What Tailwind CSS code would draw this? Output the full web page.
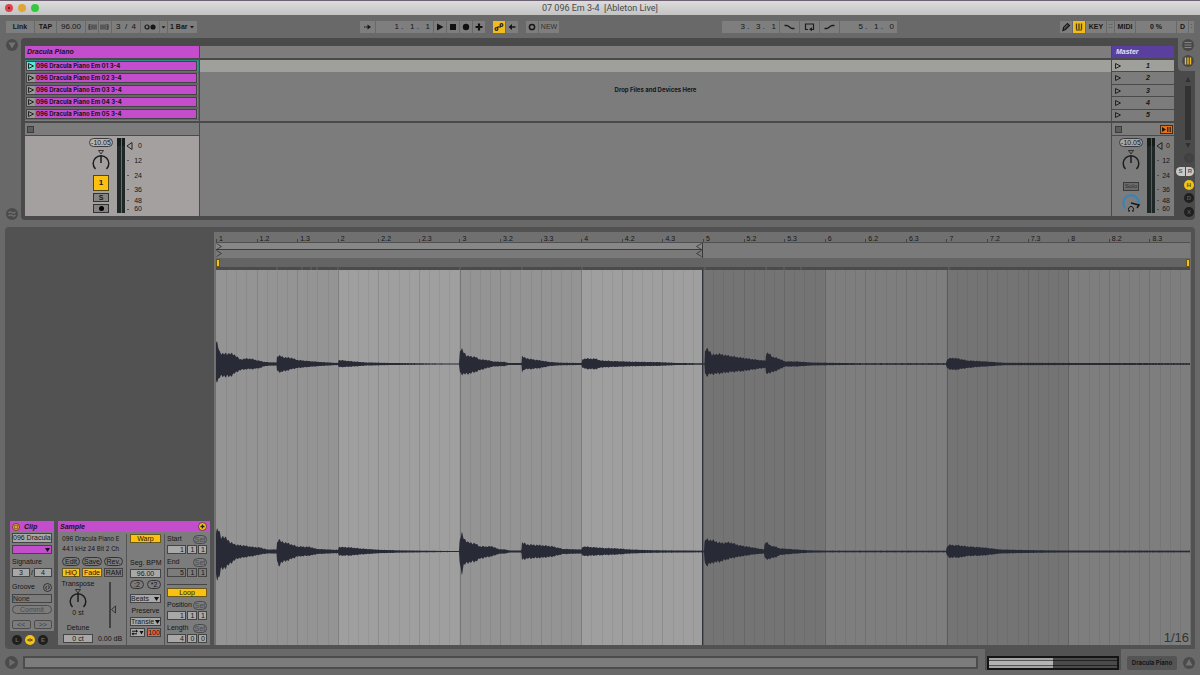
<!DOCTYPE html>
<html lang="en">
  <head>
    <meta charset="UTF-8" />
    <meta name="viewport" content="width=device-width, initial-scale=1.0" />
    <title>07 096 Em 3-4 [Ableton Live]</title>
    <script src="https://cdn.jsdelivr.net/npm/@tailwindcss/browser@4"></script>
  </head>
  <body class="flex min-h-screen flex-col bg-[#696969] font-['Liberation_Sans',Arial,sans-serif] text-[7px] leading-[10px] text-[#161616]">
    <!-- TITLE BAR -->
    <header class="grid h-[15px] grid-cols-[1fr_auto_1fr] items-center border-t border-[#6b5f70] bg-linear-to-b from-[#dcdcdc] to-[#c3c3c3] px-[5px]">
      <div class="flex gap-[5px]">
        <button aria-label="Close" class="flex size-[8px] items-center justify-center rounded-full bg-[#dd4450]"><span class="size-[2px] rounded-full bg-[#5e1018]"></span></button>
        <button aria-label="Minimize" class="size-[8px] rounded-full bg-[#dfa535]"></button>
        <button aria-label="Zoom" class="size-[8px] rounded-full bg-[#33c840]"></button>
      </div>
      <h1 class="font-[Roboto,sans-serif] text-[9px] whitespace-pre text-[#4a4a4a]">07 096 Em 3-4  [Ableton Live]</h1>
    </header>

    <!-- CONTROL BAR -->
    <nav aria-label="Control bar" class="flex h-[23px] items-center justify-between px-[6px] font-bold">
      <div class="flex h-[12px] gap-[1px]">
        <button class="w-[28px] bg-[#7e7e7e]">Link</button>
        <button class="w-[21px] bg-[#7e7e7e]">TAP</button>
        <input aria-label="Tempo" value="96.00" class="w-[28px] bg-[#7e7e7e] text-center text-[8px] font-normal" />
        <button aria-label="Nudge down" class="w-[12px] bg-[#7e7e7e]">
          <svg viewBox="0 0 11 12" class="h-[12px] w-full" stroke="#222"><path d="M2.500 3.500v5M5.500 3.500v5M7.500 3.500v5M9.500 3.500v5" stroke-width=".8" /><path d="M2.500 3.800h2M2.500 6h2M2.500 8.200h2" stroke-width=".6" /></svg>
        </button>
        <button aria-label="Nudge up" class="w-[12px] bg-[#7e7e7e]">
          <svg viewBox="0 0 11 12" class="h-[12px] w-full" stroke="#222"><path d="M1.500 3.500v5M3.500 3.500v5M5.500 3.500v5M8.500 3.500v5" stroke-width=".8" /><path d="M6.500 3.800h2M6.500 6h2M6.500 8.200h2" stroke-width=".6" /></svg>
        </button>
        <input aria-label="Time signature" value="3  /  4" class="w-[28px] bg-[#7e7e7e] text-center text-[8px] font-normal" />
        <button aria-label="Metronome" class="w-[26px] bg-[#7e7e7e]">
          <svg viewBox="0 0 26 12" class="h-[12px] w-full"><circle cx="6" cy="6" r="2" fill="none" stroke="#161616" stroke-width="1.200" /><circle cx="12" cy="6" r="2.600" fill="#161616" /><path d="M18.500 0v12" stroke="#6e6e6e" /><path d="M20.500 5.200h4l-2 2.200z" fill="#161616" /></svg>
        </button>
        <div class="relative">
          <select aria-label="Quantization" class="h-[12px] w-[29px] appearance-none bg-[#7e7e7e] pl-[2px]"><option>1 Bar</option></select>
          <svg viewBox="0 0 4 3" class="pointer-events-none absolute top-[5px] right-[3px] w-[4px]"><path d="M0 0h4l-2 2.500z" fill="#161616" /></svg>
        </div>
      </div>

      <div class="flex h-[12px] gap-[8px]">
        <div class="flex gap-[1px]">
          <button aria-label="Follow" class="w-[15px] bg-[#7e7e7e]"><svg viewBox="0 0 15 12" class="h-[12px] w-full"><path d="M4 6h4" stroke="#161616" stroke-dasharray="1.500 .5" /><path d="M7.500 3.500l3.500 2.500-3.500 2.500z" fill="#161616" /></svg></button>
          <input aria-label="Arrangement position" value="1 .   1 .   1" class="w-[57px] bg-[#7e7e7e] pr-[3px] text-right text-[8px] font-normal" />
          <button aria-label="Play" class="w-[12px] bg-[#7e7e7e]"><svg viewBox="0 0 12 12" class="size-[12px]"><path d="M3 2.500l6.500 3.500-6.500 3.500z" fill="#111" /></svg></button>
          <button aria-label="Stop" class="w-[12px] bg-[#7e7e7e]"><svg viewBox="0 0 12 12" class="size-[12px]"><path d="M3 3h6v6h-6z" fill="#111" /></svg></button>
          <button aria-label="Record" class="w-[12px] bg-[#7e7e7e]"><svg viewBox="0 0 12 12" class="size-[12px]"><circle cx="6" cy="6" r="3.200" fill="#111" /></svg></button>
          <button aria-label="Overdub" class="w-[12px] bg-[#7e7e7e]"><svg viewBox="0 0 12 12" class="size-[12px]"><path d="M6 2.500v7M2.500 6h7" stroke="#111" stroke-width="2.200" /></svg></button>
        </div>
        <div class="flex gap-[1px]">
          <button aria-label="Automation arm" class="w-[12px] bg-[#f0bb1c]"><svg viewBox="0 0 12 12" class="size-[12px]" fill="none" stroke="#222" stroke-width="1.200"><circle cx="3.500" cy="8" r="1.400" /><circle cx="8.500" cy="4" r="1.400" /><path d="M4.500 7q0-1.500 1.500-1t1.500-1" /></svg></button>
          <button aria-label="Re-enable automation" class="w-[12px] bg-[#7e7e7e]"><svg viewBox="0 0 12 12" class="size-[12px]"><path d="M6 3l-3.500 3 3.500 3z" fill="#161616" /><path d="M5 6h4.500" stroke="#161616" stroke-width="1.500" /></svg></button>
        </div>
        <div class="flex gap-[1px]">
          <button aria-label="Session record" class="w-[12px] bg-[#7e7e7e]"><svg viewBox="0 0 12 12" class="size-[12px]"><circle cx="6" cy="6" r="2.600" fill="none" stroke="#161616" stroke-width="1.500" /></svg></button>
          <button class="w-[20px] bg-[#7e7e7e] font-normal text-[#333]">NEW</button>
        </div>
      </div>

      <div class="flex h-[12px] gap-[1px]">
        <input aria-label="Loop start" value="3 .   3 .   1" class="w-[57px] bg-[#7e7e7e] pr-[3px] text-right text-[8px] font-normal" />
        <button aria-label="Punch in" class="w-[19px] bg-[#7e7e7e]"><svg viewBox="0 0 19 12" class="h-[12px] w-full"><path d="M4.500 4.500h2q1.500 0 3 1.500t3 1.500h2" fill="none" stroke="#1c1c1c" stroke-width="1.300" /></svg></button>
        <button aria-label="Loop switch" class="w-[19px] bg-[#7e7e7e]"><svg viewBox="0 0 19 12" class="h-[12px] w-full"><path d="M8 8.500h-2.500v-5.500h8v5.500h-2" fill="none" stroke="#1c1c1c" stroke-width="1.200" /><path d="M12 6.300v4l-3-2z" fill="#1c1c1c" /></svg></button>
        <button aria-label="Punch out" class="w-[19px] bg-[#7e7e7e]"><svg viewBox="0 0 19 12" class="h-[12px] w-full"><path d="M4.500 7.500h2q1.500 0 3-1.500t3-1.500h2" fill="none" stroke="#1c1c1c" stroke-width="1.300" /></svg></button>
        <input aria-label="Loop length" value="5 .   1 .   0" class="w-[57px] bg-[#7e7e7e] pr-[3px] text-right text-[8px] font-normal" />
      </div>

      <div class="flex h-[12px] gap-[1px]">
        <button aria-label="Draw mode" class="w-[12px] bg-[#7e7e7e]"><svg viewBox="0 0 12 12" class="size-[12px]" fill="none" stroke="#161616"><path d="M3 9.500l.5-3 4-4 2 2-4 4z" stroke-width="1.200" /><path d="M4 8.500l4.500-4.500" /></svg></button>
        <button aria-label="Computer MIDI keyboard" class="w-[12px] bg-[#f0bb1c]"><svg viewBox="0 0 12 12" class="size-[12px]"><path d="M3.500 2.500v6M6 2.500v6M8.500 2.500v6" stroke="#4b3b08" stroke-width="1.300" /><path d="M3 9h6" stroke="#4b3b08" /></svg></button>
        <button class="w-[20px] bg-[#7e7e7e]">KEY</button>
        <span class="w-[7px] bg-[#7e7e7e] text-center text-[#555]">::</span>
        <button class="w-[20px] bg-[#7e7e7e]">MIDI</button>
        <output aria-label="CPU load" class="w-[40px] bg-[#7e7e7e] text-center leading-[12px]">0 %</output>
        <button class="w-[11px] bg-[#7e7e7e]">D</button>
        <span class="w-[5px] bg-[#7e7e7e] text-center text-[#555]">:</span>
      </div>
    </nav>

    <!-- SESSION VIEW -->
    <main class="flex flex-1 flex-col">
      <section aria-label="Session view" class="mr-[5px] flex h-[182px]">
        <div class="flex w-[21px] flex-col items-center justify-between pt-[1px] pl-[2px]">
          <button aria-label="Show browser" class="size-[12px]"><svg viewBox="0 0 12 12"><circle cx="6" cy="6" r="6" fill="#4b4b4b" /><path d="M2.500 3.500h7l-3.500 6z" fill="#727272" /></svg></button>
          <button aria-label="Groove pool" class="size-[12px]"><svg viewBox="0 0 12 12"><circle cx="6" cy="6" r="6" fill="#4b4b4b" /><path d="M2.500 5q1.700-2 3.500-.5t3.500-.5M2.500 8q1.700-2 3.500-.5t3.500-.5" fill="none" stroke="#727272" stroke-width="1.200" /></svg></button>
        </div>

        <div class="flex flex-1 gap-[1px] rounded-l-[4px] bg-[#4a4a4a] pt-[8px] pb-[4px] pl-[4px]">
          <!-- TRACK 1 -->
          <article class="flex w-[174px] flex-col">
            <h2 class="mb-[2px] h-[12px] bg-[#c34dcc] pl-[2px] leading-[12px] font-bold italic">Dracula Piano</h2>
            <ul id="clips" class="mb-[2px] h-[61px] bg-[#7c7c7c] font-[Inter,sans-serif] text-[6px] font-bold"></ul>
            <div class="mb-[1px] flex h-[12px] items-center bg-[#7c7c7c] pl-[2px]"><button aria-label="Stop clips" class="size-[7px] border border-[#3c3c3c] bg-[#5c5c5c]"></button></div>
            <div class="flex flex-1 gap-[4px] bg-[#a3a09f] pt-[2px] pl-[64px]">
              <div class="flex w-[24px] flex-col items-center">
                <input aria-label="Track volume" value="-10.05" class="h-[9px] w-[24px] rounded-full border border-[#3a3a3a] bg-[#b5b3b2] text-center" />
                <svg viewBox="0 0 24 26" class="h-[26px] w-[24px]" fill="none" stroke="#1d1d1d"><path d="M9.500 3.500h5l-2.500 3.500z" stroke-width=".8" /><path d="M6.500 22a7.800 7.800 0 1 1 11 0M12 8v8" stroke-width="1.500" /></svg>
                <button class="mt-[2px] h-[16px] w-[16px] border border-[#55480f] bg-[#fcc00f] text-[8px] font-bold">1</button>
                <button class="mt-[2px] h-[9px] w-[16px] border border-[#333] bg-[#858483] leading-[7px] font-bold">S</button>
                <button aria-label="Arm" class="mt-[2px] flex h-[9px] w-[16px] items-center justify-center border border-[#333] bg-[#858483]"><span class="size-[5px] rounded-full bg-black"></span></button>
              </div>
              <div class="flex h-[75px] w-[8px] flex-none gap-[1px] bg-[#6c6c6c]"><i class="flex-1 border-t-[8px] border-[#161b1c] bg-[#202727]"></i><i class="flex-1 border-t-[8px] border-[#161b1c] bg-[#202727]"></i></div>
              <svg viewBox="0 0 22 76" class="-ml-[3px] h-[76px] w-[22px] flex-none text-[7px]" fill="#161616" text-anchor="end">
                <path d="M6 4.500v7l-5-3.500z" fill="none" stroke="#222" />
                <path d="M1 22.500h2M1 37.500h2M1 51.500h2M1 62.500h2M1 71.500h2" stroke="#444" stroke-width=".8" />
                <text x="16" y="10">0</text><text x="16" y="25">12</text><text x="16" y="40">24</text><text x="16" y="54">36</text><text x="16" y="65">48</text><text x="16" y="73">60</text>
              </svg>
            </div>
          </article>

          <!-- EMPTY TRACK AREA -->
          <div class="flex flex-1 flex-col">
            <div class="mb-[2px] h-[12px] bg-[#7e7c7c]"></div>
            <div class="mb-[2px] h-[61px] bg-[#7c7c7c]">
              <div class="h-[12px] bg-[#9f9f9c]"></div>
              <p class="pt-[13px] text-center font-[Inter,sans-serif] text-[6px] font-bold">Drop Files and Devices Here</p>
            </div>
            <div class="flex-1 bg-[#7c7c7c]"></div>
          </div>

          <!-- MASTER -->
          <article class="flex w-[62px] flex-col">
            <h2 class="mb-[2px] h-[12px] bg-[#5b3f9f] pl-[4px] leading-[12px] font-bold text-[#e6e0ef] italic">Master</h2>
            <ol id="scenes" class="mb-[2px] flex h-[61px] flex-col gap-[1px] font-bold italic"></ol>
            <div class="mb-[1px] flex h-[12px] items-center justify-between bg-[#7c7c7c] pr-[1px] pl-[3px]">
              <button aria-label="Stop all clips" class="size-[7px] border border-[#3c3c3c] bg-[#5c5c5c]"></button>
              <button aria-label="Back to arrangement" class="h-[9px] w-[13px] border border-[#4c2a10] bg-[#e2701c]"><svg viewBox="0 0 11 7"><path d="M1 1l4 2.500-4 2.500z" fill="#1a1a1a" /><path d="M6.500 1v5M8 1v5M9.500 1v5" stroke="#1a1a1a" stroke-width=".8" /></svg></button>
            </div>
            <div class="flex flex-1 gap-[4px] bg-[#7c7c7c] pt-[2px] pl-[7px]">
              <div class="flex w-[24px] flex-none flex-col items-center">
                <input aria-label="Master volume" value="-10.05" class="h-[9px] w-[24px] rounded-full border border-[#3a3a3a] bg-[#a6a6a6] text-center" />
                <svg viewBox="0 0 24 26" class="h-[26px] w-[24px]" fill="none" stroke="#1d1d1d"><path d="M9.500 3.500h5l-2.500 3.500z" stroke-width=".8" /><path d="M6.500 22a7.800 7.800 0 1 1 11 0M12 8v8" stroke-width="1.500" /></svg>
                <button class="mt-[9px] h-[9px] w-[16px] border border-[#3a3a3a] bg-[#6a6a6a] text-[6px] leading-[7px] text-[#303030]">Solo</button>
                <svg viewBox="0 0 24 20" class="mt-[1px] h-[20px] w-[24px]" fill="none"><path d="M6.500 16.500a7.800 7.800 0 1 1 13-3" stroke="#2b87c0" stroke-width="1.800" /><path d="M12 11l8 2-2 3" stroke="#161616" stroke-width="1.500" /><path d="M10.500 19a2.500 2.500 0 1 1 3 0M9 19h2M13 19h2" stroke="#161616" /></svg>
              </div>
              <div class="flex h-[75px] w-[8px] flex-none gap-[1px] bg-[#5c5c5c]"><i class="flex-1 border-t-[8px] border-[#161b1c] bg-[#202727]"></i><i class="flex-1 border-t-[8px] border-[#161b1c] bg-[#202727]"></i></div>
              <svg viewBox="0 0 18 76" class="-ml-[3px] h-[76px] w-[18px] flex-none text-[7px]" fill="#161616" text-anchor="end">
                <path d="M6 4.500v7l-5-3.500z" fill="none" stroke="#222" />
                <path d="M1 22.500h2M1 37.500h2M1 51.500h2M1 62.500h2M1 71.500h2" stroke="#444" stroke-width=".8" />
                <text x="14" y="10">0</text><text x="14" y="25">12</text><text x="14" y="40">24</text><text x="14" y="54">36</text><text x="14" y="65">48</text><text x="14" y="73">60</text>
              </svg>
            </div>
          </article>
        </div>

        <!-- VIEW SELECTORS -->
        <aside class="flex w-[21px] flex-col rounded-br-[4px] bg-[#4a4a4a]">
          <div class="ml-[4px] flex h-[33px] flex-col items-end gap-[4px] rounded-bl-[4px] bg-[#696969] pt-[1px] pr-[1px]">
            <button aria-label="Arrangement view" class="size-[12px]"><svg viewBox="0 0 12 12"><circle cx="6" cy="6" r="6" fill="#484848" /><path d="M2.500 3.500h7M2.500 6h7M2.500 8.500h7" stroke="#858585" /></svg></button>
            <button aria-label="Session view" class="size-[12px]"><svg viewBox="0 0 12 12"><circle cx="6" cy="6" r="6" fill="#484848" /><path d="M3.500 2.500v7M6 2.500v7M8.500 2.500v7" stroke="#f0bb1c" stroke-width="1.300" /></svg></button>
          </div>
          <div class="flex flex-1 flex-col items-end justify-between rounded-r-[4px] pt-[5px] pr-[1px] pb-[3px]">
            <svg viewBox="0 0 12 6" class="w-[12px]"><path d="M3.500 6h5l-2.500-5z" fill="#303030" /></svg>
            <div class="mr-[3px] h-[54px] w-[6px] bg-[#333]"></div>
            <svg viewBox="0 0 12 6" class="w-[12px]"><path d="M3.500 0h5l-2.500 5z" fill="#303030" /></svg>
            <button aria-label="In/Out" class="size-[10px] rounded-full bg-[#414141] text-[5px] text-[#555]">I</button>
            <div class="flex gap-[1px] text-[6px] font-bold text-[#555]">
              <button class="h-[9px] w-[9px] rounded-l-full bg-[#c9c9c9] leading-[9px]">S</button>
              <button class="h-[9px] w-[8px] rounded-r-full bg-[#c9c9c9] leading-[9px]">R</button>
            </div>
            <button class="size-[10px] rounded-full bg-[#f2c21a] text-[6px] font-bold text-[#5c4a0a]">H</button>
            <button class="size-[10px] rounded-full bg-[#1f1f1f] text-[6px] font-bold text-[#555]">D</button>
            <button class="size-[10px] rounded-full bg-[#1f1f1f] text-[6px] font-bold text-[#555]">X</button>
          </div>
        </aside>
      </section>

      <!-- CLIP VIEW -->
      <section aria-label="Clip view" class="mx-[5px] mt-[7px] flex flex-1 rounded-t-[4px] rounded-bl-[4px] bg-[#525252] pt-[5px] pr-[4px] pb-[4px] pl-[5px]">
        <div class="flex w-[204px] flex-none items-end gap-[4px]">
          <div class="w-[44px]">
            <!-- CLIP BOX -->
            <div class="h-[110px] bg-[#7c7c7c]">
              <h2 class="flex h-[11px] items-center gap-[4px] bg-[#c34dcc] pl-[2px] font-bold italic">
                <svg viewBox="0 0 8 8" class="size-[8px]"><circle cx="4" cy="4" r="3.500" fill="#e0a050" stroke="#6b4a10" /><path d="M2.500 2.500h3v3h-3z" fill="none" stroke="#6b4a10" stroke-width=".6" /></svg>Clip
              </h2>
              <div class="flex flex-col px-[2px] pt-[1px]">
                <input aria-label="Clip name" value="096 Dracula" class="h-[10px] border border-[#444] bg-[#a8a8a8]" />
                <div class="relative mt-[2px] h-[9px]">
                  <select aria-label="Clip color" class="block h-[9px] w-full appearance-none border border-[#444] bg-[#c34dcc]"><option></option></select>
                  <svg viewBox="0 0 5 4" class="pointer-events-none absolute top-[3px] right-[2px] w-[5px]"><path d="M0 0h5l-2.500 4z" fill="#111" /></svg>
                </div>
                <label for="sig" class="mt-[3px]">Signature</label>
                <div class="mt-[1px] flex justify-between leading-[9px]">
                  <input id="sig" value="3" class="h-[9px] w-[18px] border border-[#444] bg-[#a8a8a8] text-center" />/<input aria-label="Signature denominator" value="4" class="h-[9px] w-[18px] border border-[#444] bg-[#a8a8a8] text-center" />
                </div>
                <div class="mt-[5px] flex items-center justify-between">
                  <label for="groove">Groove</label>
                  <button aria-label="Hot swap groove" class="size-[9px]"><svg viewBox="0 0 9 9" fill="none" stroke="#222"><circle cx="4.500" cy="4.500" r="4" stroke-width=".8" /><path d="M4 6.800q-2.500-1.500-.5-3.800M5 2.200q2.500 1.500 .5 3.800" stroke-width=".9" /></svg></button>
                </div>
                <select id="groove" class="mt-[2px] h-[9px] w-full appearance-none border border-[#444] bg-[#7c7c7c] leading-[7px] text-[#222]"><option>None</option></select>
                <button class="mt-[2px] h-[9px] rounded-full border border-[#4c4c4c] leading-[7px] text-[#4c4c4c]">Commit</button>
                <div class="mt-[6px] flex gap-[3px] leading-[7px] text-[#3c3c3c]">
                  <button class="h-[9px] flex-1 rounded-[2px] border border-[#4c4c4c]">&lt;&lt;</button>
                  <button class="h-[9px] flex-1 rounded-[2px] border border-[#4c4c4c]">&gt;&gt;</button>
                </div>
              </div>
            </div>
            <div class="flex h-[14px] items-center gap-[3px] pt-[3px] pl-[2px] text-[6px] font-bold">
              <button class="size-[10px] rounded-full bg-[#1f1f1f] text-[#666]">L</button>
              <button aria-label="Sample box" class="size-[10px]"><svg viewBox="0 0 10 10"><circle cx="5" cy="5" r="5" fill="#f2c21a" /><path d="M2 5h6M3.500 4v2M5 3v4M6.500 4v2" stroke="#5c4a0a" stroke-width=".8" /></svg></button>
              <button class="size-[10px] rounded-full bg-[#1f1f1f] text-[#666]">E</button>
            </div>
          </div>

          <!-- SAMPLE BOX -->
          <div class="h-[124px] w-[152px] bg-[#7c7c7c]">
            <h2 class="flex h-[11px] items-center justify-between bg-[#c34dcc] pr-[3px] pl-[2px] font-bold italic">Sample
              <svg viewBox="0 0 9 9" class="size-[9px]"><circle cx="4.500" cy="4.500" r="4" fill="#fcc00f" stroke="#333" stroke-width=".8" /><path d="M2.500 4.500h4M4.500 2.500v4" stroke="#222" stroke-width="1.300" /></svg>
            </h2>
            <div class="flex h-[113px] pt-[2px]">
              <div class="flex w-[69px] flex-none flex-col border-r border-[#555] pr-[3px] pl-[4px]">
                <p class="font-[Inter,sans-serif] text-[6px] leading-[10px] whitespace-nowrap">096 Dracula Piano E</p>
                <p class="font-[Inter,sans-serif] text-[6px] leading-[10px] whitespace-nowrap">44.1 kHz 24 Bit 2 Ch</p>
                <div class="mt-[3px] flex justify-between leading-[7px]">
                  <button class="h-[9px] w-[18px] rounded-full border border-[#333]">Edit</button>
                  <button class="h-[9px] w-[20px] rounded-full border border-[#333]">Save</button>
                  <button class="h-[9px] w-[19px] rounded-full border border-[#333]">Rev.</button>
                </div>
                <div class="mt-[2px] flex justify-between leading-[7px]">
                  <button class="h-[9px] w-[18px] border border-[#6a5a1a] bg-[#fcc00f]">HiQ</button>
                  <button class="h-[9px] w-[20px] border border-[#6a5a1a] bg-[#fcc00f]">Fade</button>
                  <button class="h-[9px] w-[19px] border border-[#444]">RAM</button>
                </div>
                <div class="flex justify-between pt-[2px]">
                  <div class="flex w-[32px] flex-col items-center">
                    <span>Transpose</span>
                    <svg viewBox="0 0 24 20" class="h-[20px] w-[24px]" fill="none" stroke="#1d1d1d"><path d="M9.500 .5h5l-2.500 3.500z" stroke-width=".8" /><path d="M6.500 18a7.800 7.800 0 1 1 11 0M12 5v8" stroke-width="1.500" /></svg>
                    <output class="leading-[8px]">0 st</output>
                    <label for="detune" class="mt-[6px]">Detune</label>
                    <input id="detune" value="0 ct" class="mt-[1px] h-[9px] w-[30px] border border-[#444] bg-[#a8a8a8] text-center" />
                  </div>
                  <div class="flex w-[26px] flex-col items-center">
                    <svg viewBox="0 0 12 52" class="h-[52px] w-[12px]"><path d="M6 3v46" stroke="#222" stroke-width="1.300" /><path d="M11.500 27v7l-4-3.500z" fill="none" stroke="#222" stroke-width=".8" /></svg>
                    <output class="mt-[3px] whitespace-nowrap">0.00 dB</output>
                  </div>
                </div>
              </div>

              <div class="flex w-[38px] flex-none flex-col border-r border-[#555] px-[3px]">
                <button class="h-[9px] border border-[#6a5a1a] bg-[#fcc00f] leading-[7px]">Warp</button>
                <label for="bpm" class="mt-[15px] text-center whitespace-nowrap">Seg. BPM</label>
                <input id="bpm" value="96.00" class="mt-[1px] h-[9px] w-full border border-[#444] bg-[#a8a8a8] text-center" />
                <div class="mt-[2px] flex justify-between leading-[7px]">
                  <button class="h-[9px] w-[14px] rounded-full border border-[#333]">:2</button>
                  <button class="h-[9px] w-[14px] rounded-full border border-[#333]">*2</button>
                </div>
                <div class="relative mt-[5px] h-[9px]">
                  <select aria-label="Warp mode" class="block h-[9px] w-full appearance-none border border-[#444] bg-[#a8a8a8] leading-[7px]"><option>Beats</option></select>
                  <svg viewBox="0 0 5 4" class="pointer-events-none absolute top-[3px] right-[2px] w-[5px]"><path d="M0 0h5l-2.500 4z" fill="#111" /></svg>
                </div>
                <label for="preserve" class="mt-[3px] text-center">Preserve</label>
                <div class="relative mt-[1px] h-[9px]">
                  <select id="preserve" class="block h-[9px] w-full appearance-none border border-[#444] bg-[#a8a8a8] pr-[6px] leading-[7px]"><option>Transients</option></select>
                  <svg viewBox="0 0 5 4" class="pointer-events-none absolute top-[3px] right-[1px] w-[5px]"><path d="M0 0h5l-2.500 4z" fill="#111" /></svg>
                </div>
                <div class="mt-[2px] flex gap-[2px]">
                  <button aria-label="Transient loop mode" class="h-[9px] w-[15px] border border-[#444] bg-[#a8a8a8]"><svg viewBox="0 0 13 7"><path d="M1 2.200h5M1 4.800h5" stroke="#111" /><path d="M5 .5l2 1.700-2 1.600zM2.500 3.200l-2 1.600 2 1.700zM8.500 2h4l-2 3.500z" fill="#111" /></svg></button>
                  <input aria-label="Transient envelope" value="100" class="h-[9px] w-[14px] border border-[#444] bg-[#e0683a] text-center" />
                </div>
              </div>

              <div id="markers" class="flex min-w-0 flex-1 flex-col pr-[3px] pl-[2px]"></div>
            </div>
          </div>
        </div>

        <!-- SAMPLE EDITOR -->
        <div class="flex min-w-0 flex-1 flex-col bg-[#707070] pr-[1px] pl-[2px]">
          <div id="ruler" class="grid h-[11px] grid-cols-24 border-b border-[#505050]"></div>
          <div class="flex h-[15px] flex-col bg-[#7a7a7a]">
            <div class="flex h-[7px] w-1/2 justify-between border-r border-b border-[#3a3a3a] bg-[#878787]">
              <svg viewBox="0 0 6 7" class="h-[7px]"><path d="M.5 .5l5 3-5 3" fill="none" stroke="#333" stroke-width=".8" /></svg>
              <svg viewBox="0 0 6 7" class="h-[7px]"><path d="M5.500 .5l-5 3 5 3" fill="none" stroke="#333" stroke-width=".8" /></svg>
            </div>
            <div class="flex h-[8px] w-1/2 justify-between border-r border-[#3a3a3a]">
              <svg viewBox="0 0 6 7" class="h-[7px]"><path d="M.5 .5l5 3-5 3" fill="none" stroke="#333" stroke-width=".8" /></svg>
              <svg viewBox="0 0 6 7" class="h-[7px]"><path d="M5.500 .5l-5 3 5 3" fill="none" stroke="#333" stroke-width=".8" /></svg>
            </div>
          </div>
          <div class="flex h-[9px] items-end justify-between bg-[#646464]">
            <span class="h-[8px] w-[4px] border border-[#6a5510] bg-[#f2c21a]"></span>
            <span class="h-[8px] w-[4px] border border-[#6a5510] bg-[#f2c21a]"></span>
          </div>
          <svg id="transients" viewBox="0 0 974 3" preserveAspectRatio="none" class="h-[3px] w-full bg-[#4b4b4b]"></svg>
          <div class="relative flex-1">
            <svg id="wave" viewBox="0 0 974 375" preserveAspectRatio="none" class="absolute inset-0 size-full"></svg>
            <span class="absolute right-[1px] bottom-0 text-[13px] leading-[14px] text-[#333]">1/16</span>
          </div>
        </div>
      </section>
    </main>

    <!-- STATUS BAR -->
    <footer class="flex h-[26px]">
      <div class="flex flex-1 items-center gap-[5px] pt-[1px] pl-[5px]">
        <button aria-label="Info view" class="size-[13px]"><svg viewBox="0 0 12 12"><circle cx="6" cy="6" r="6" fill="#4b4b4b" /><path d="M4 2.500l5.500 3.500-5.500 3.500z" fill="#6c6c6c" /></svg></button>
        <div role="status" class="mr-[7px] h-[13px] flex-1 border-2 border-[#4c4c4c] bg-[#7c7c7c]"></div>
      </div>
      <div class="h-[21px] w-[136px] bg-[#525252] px-[2px] pt-[7px]">
        <div class="flex h-[14px] border-2 border-[#141414]">
          <div class="flex w-1/2 flex-col gap-[1px] bg-[#555]"><i class="h-[2px] bg-[#a4a4a4]"></i><i class="h-[4px] bg-[#b4b4b4]"></i><i class="flex-1 bg-[#a4a4a4]"></i></div>
          <div class="flex flex-1 flex-col gap-[1px] bg-[#222]"><i class="h-[2px] bg-[#4a4a4a]"></i><i class="h-[4px] bg-[#4a4a4a]"></i><i class="flex-1 bg-[#4a4a4a]"></i></div>
        </div>
      </div>
      <div class="flex items-center gap-[6px] pt-[1px] pr-[5px] pl-[6px]">
        <button class="h-[14px] w-[50px] rounded-[2px] bg-[#545454] font-[Inter,sans-serif] text-[6px] font-bold">Dracula Piano</button>
        <button aria-label="Show device view" class="size-[12px]"><svg viewBox="0 0 12 12"><circle cx="6" cy="6" r="6" fill="#4b4b4b" /><path d="M6 2l3.500 6.500h-7z" fill="#727272" /></svg></button>
      </div>
    </footer>

    <script>
      const play = '<svg viewBox="0 0 8 8" class="size-[8px]"><path d="M1.500 1.500l5 2.500-5 2.500z" fill="none" stroke="#222" /></svg>';

      for (let i = 1; i <= 5; i++) {
        document.getElementById("clips").innerHTML += `
          <li class="h-[12px] border pr-[1px] ${i === 1 ? "border-[#2f8a82]" : "border-[#666]"}">
            <button class="flex h-[10px] w-full items-center border border-[#444] bg-[#c34dcc] leading-[8px]">
              <span class="mr-[1px] ${i === 1 ? "bg-[#5fe6d8]" : "bg-[#979797]"}">${play}</span>096 Dracula Piano Em 0${i} 3-4
            </button>
          </li>`;
        document.getElementById("scenes").innerHTML += `
          <li class="flex-1 ${i === 1 ? "bg-[#9f9f9c]" : "bg-[#7c7c7c]"}">
            <button class="flex h-full w-full items-center pl-[2px]">${play}<span class="ml-[24px]">${i}</span></button>
          </li>`;
      }

      // start / end / loop markers
      const marker = (name, values, gap, dim) => `
        <div class="flex items-center justify-between ${gap}">
          <span>${name}</span>
          <button class="h-[9px] w-[14px] rounded-full border border-[#4a4a4a] leading-[7px] text-[#4a4a4a]">Set</button>
        </div>
        <div class="mt-[1px] grid h-[9px] grid-cols-[2fr_1fr_1fr] gap-[1px]">
          ${values.map((v, i) => `<input aria-label="${name} ${i + 1}" value="${v}" class="h-[9px] w-full min-w-0 border border-[#444] pr-[1px] text-right ${dim ? "bg-[#7c7c7c]" : "bg-[#a8a8a8]"}" />`).join("")}
        </div>`;
      document.getElementById("markers").innerHTML =
        marker("Start", [1, 1, 1], "", false) +
        marker("End", [5, 1, 1], "mt-[3px]", true) +
        '<hr class="mt-[7px] border-[#444]" />' +
        '<button class="mt-[3px] h-[9px] border border-[#6a5a1a] bg-[#fcc00f] leading-[7px]">Loop</button>' +
        marker("Position", [1, 1, 1], "mt-[3px]", false) +
        marker("Length", [4, 0, 0], "mt-[3px]", false);

      // ruler: 8 bars of 3/4
      let cells = "";
      for (let i = 0; i < 24; i++) {
        const beat = (i % 3) + 1;
        const label = Math.floor(i / 3) + 1 + (beat > 1 ? "." + beat : "");
        cells += `<div class="flex items-end"><i class="h-[3px] w-[1px] bg-[#444]"></i><span class="pl-[2px] leading-[6px]">${label}</span></div>`;
      }
      document.getElementById("ruler").innerHTML = cells;

      document.getElementById("transients").innerHTML = [61, 86, 95, 101, 122, 244, 306, 366, 489, 550, 568, 585, 733]
        .map((x) => `<path d="M${x} 0v3" stroke="#666" />`)
        .join("");

      // envelope points: x, height above, height below
      const left = [
        [0, 21, 16], [1.5, 20, 17], [3.5, 12, 13], [7, 10, 12], [14, 10.5, 12.5], [19, 9, 9], [24, 4.5, 6], [31, 5.5, 5], [36, 5, 5],
        [44, 3, 4], [49, 2, 2], [60.5, 1.5, 1.5], [61, 8, 7], [64, 8, 8], [69, 6.5, 7], [76, 6, 5], [81, 4, 4], [91, 3, 3], [104, 2, 2],
        [122, 1, 1], [122.6, 4, 3], [127, 3.5, 3], [137, 2.5, 2.5], [151, 1.5, 1.5], [177, 1, 1], [207, 0.7, 0.7], [243, 0.5, 0.5],
        [244, 14, 9], [246, 14, 10], [251, 8, 10], [259, 7, 8], [264, 4.5, 6], [271, 4, 4], [277, 2.5, 2.5], [289, 2, 2], [292, 1, 1],
        [305.5, 1, 1], [306, 8, 8], [309, 6, 5], [314, 5, 5], [324, 3.5, 4], [334, 2, 2], [344, 1.3, 1.3], [365.6, 1, 1], [366.4, 5, 4],
        [372, 5.5, 5], [381, 5, 5], [384, 3.5, 3.5], [394, 3, 3], [414, 2.3, 2.3], [444, 1.8, 1.8], [461, 1, 1], [486, 0.7, 0.7],
        [488.5, 0.7, 0.7], [489, 13, 9], [490.6, 15, 12], [494, 13, 10], [496, 9, 10], [502, 10, 9.5], [514, 8, 8], [527, 6, 7],
        [547, 3.5, 4], [549.5, 3.5, 4], [550, 10, 10], [552, 11, 9], [557, 7, 8], [564, 5, 5], [569, 2.5, 2.5], [580, 2.5, 2.5],
        [597, 1.4, 1.4], [644, 0.8, 0.8], [730, 0.8, 0.8], [730.6, 3, 3], [732, 5.5, 5], [739, 6, 6], [744, 5, 5], [751, 3.5, 4],
        [761, 3, 3], [777, 2, 2], [789, 1.2, 1.2], [974, 0.8, 0.8],
      ];
      const right = [
        [0, 18, 22], [1.5, 22, 28], [2.7, 21, 26], [5, 15, 18], [11, 13, 15], [14, 9, 12], [21, 6.5, 7], [27, 6, 6], [37, 4.5, 4.5],
        [44, 4, 3], [51, 2, 2], [60.5, 2, 2], [61, 9, 9], [62.5, 12, 15], [65, 10, 11], [74, 7.5, 8], [81, 5, 5], [94, 4.5, 4],
        [101, 2.5, 2.5], [122, 1.6, 1.6], [122.8, 4.5, 4], [134, 4, 4], [144, 3, 3], [161, 1.8, 1.8], [181, 1.2, 1.2], [207, 0.8, 0.8],
        [243, 0.5, 0.5], [243.7, 12, 12], [245.7, 18, 22], [248, 13, 13], [252, 9, 11], [259, 8, 10], [264, 5, 7], [277, 5, 4.5],
        [282, 2.5, 2.5], [289, 2, 2], [294, 1, 1], [305.4, 1, 1], [306, 9, 8], [311, 7, 7], [327, 6, 6], [337, 5, 5], [347, 2.5, 2.5],
        [365.7, 2, 2], [366.7, 5, 4.5], [387, 3.5, 3.5], [401, 3, 3], [414, 2, 2], [434, 1.3, 1.3], [486, 0.8, 0.8], [488, 0.8, 0.8],
        [488.7, 11, 10], [490, 12, 14], [497, 11, 11], [504, 8.5, 10], [514, 9, 7], [524, 6, 5], [537, 4, 3], [548, 2, 2],
        [548.7, 8, 6], [550, 10, 8], [554, 6, 7], [559, 5, 6], [564, 3, 3.5], [574, 2.5, 2.5], [591, 1.3, 1.3], [611, 0.8, 0.8],
        [730, 0.8, 0.8], [730.7, 4, 3], [732.5, 6.5, 6], [744, 6, 6], [751, 5, 4.5], [767, 4, 4], [784, 2, 2], [817, 1.3, 1.3],
        [851, 1, 1], [974, 0.8, 0.8],
      ];

      function outline(points, mid) {
        const top = [];
        const bottom = [];
        let k = 0;
        for (let x = 0; x <= 974; x += 0.5) {
          while (k < points.length - 2 && points[k + 1][0] <= x) k++;
          const [x0, u0, d0] = points[k];
          const [x1, u1, d1] = points[k + 1];
          const t = (x - x0) / (x1 - x0);
          const ripple = 1 + 0.09 * Math.sin(x * 2.1) + 0.04 * Math.sin(x * 0.9);
          top.push(`${x} ${(mid - (u0 + (u1 - u0) * t) * ripple).toFixed(1)}`);
          bottom.unshift(`${x} ${(mid + (d0 + (d1 - d0) * t) * ripple).toFixed(1)}`);
        }
        return "M" + top.concat(bottom).join("L") + "z";
      }

      const bands = ["#949494", "#9f9f9f", "#949494", "#9f9f9f", "#747474", "#7e7e7e", "#747474", "#7e7e7e"];
      const bar = 974 / 8;
      let svg = bands.map((c, i) => `<rect x="${i * bar}" width="${bar + 1}" height="375" fill="${c}" />`).join("");
      for (let i = 1; i < 96; i++) {
        const alpha = i % 12 === 0 ? 0.2 : i % 4 === 0 ? 0.11 : 0.06;
        svg += `<path d="M${Math.round((i * bar) / 12) + 0.5} 0v375" stroke="#000" stroke-opacity="${alpha}" />`;
      }
      svg += '<path d="M486.500 0v375" stroke="#2e3236" />';
      svg += `<path d="${outline(left, 94)}${outline(right, 281.5)}" fill="#282b36" />`;
      document.getElementById("wave").innerHTML = svg;
    </script>
  </body>
</html>
